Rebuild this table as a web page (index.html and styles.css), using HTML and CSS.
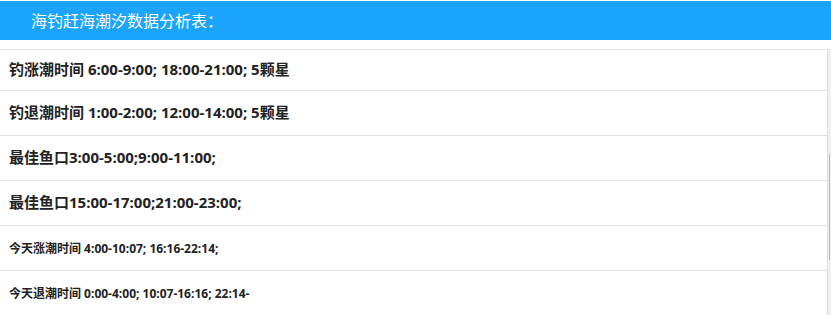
FILE: index.html
```html
<!DOCTYPE html>
<html lang="zh-CN">
<head>
<meta charset="utf-8">
<title>海钓赶海潮汐数据分析表</title>
<link rel="stylesheet" href="styles.css">
</head>
<body>
<div class="page">
  <header class="title-bar">海钓赶海潮汐数据分析表：</header>
  <div class="panel">
    <ul class="list">
      <li class="row row-first big">钓涨潮时间 6:00-9:00; 18:00-21:00; 5颗星</li>
      <li class="row big">钓退潮时间 1:00-2:00; 12:00-14:00; 5颗星</li>
      <li class="row big">最佳鱼口3:00-5:00;9:00-11:00;</li>
      <li class="row big">最佳鱼口15:00-17:00;21:00-23:00;</li>
      <li class="row small">今天涨潮时间 4:00-10:07; 16:16-22:14;</li>
      <li class="row small">今天退潮时间 0:00-4:00; 10:07-16:16; 22:14-</li>
    </ul>
    <div class="scrollbar"><div class="thumb"></div></div>
  </div>
</div>
</body>
</html>
```

FILE: styles.css
```css
html, body {
  margin: 0;
  padding: 0;
  background: #ffffff;
}
body {
  font-family: "Open Sans", "Noto Sans CJK SC", sans-serif;
  color: #222;
}
.page {
  width: 831px;
  height: 315px;
  overflow: hidden;
  padding-top: 1px;
  box-sizing: border-box;
}
.title-bar {
  height: 39px;
  background: #1ba4fd;
  color: #fff;
  font-family: "Noto Sans CJK SC", sans-serif;
  font-size: 16px;
  line-height: 39px;
  padding-left: 31px;
}
.panel {
  margin-top: 9px;
  display: flex;
  border-top: 1px solid #e2e2e2;
  height: 270px;
}
.list {
  list-style: none;
  margin: 0;
  padding: 0;
  flex: 1;
  border-right: 1px solid #dedede;
}
.row {
  height: 44px;
  box-sizing: border-box;
  border-bottom: 1px solid #e2e2e2;
  display: flex;
  align-items: center;
  padding-left: 9px;
  font-weight: bold;
  white-space: nowrap;
}
.big {
  height: 45px;
  padding-bottom: 3px;
  font-size: 15px;
}
.row-first {
  height: 41px;
}
.small {
  height: 45px;
  font-size: 12px;
}
.scrollbar {
  width: 3px;
  background: #efefef;
  display: flex;
  flex-direction: column;
}
.thumb {
  margin-top: 104px;
  margin-left: 1px;
  width: 1px;
  height: 106px;
  background: #b8b8b8;
}
```
